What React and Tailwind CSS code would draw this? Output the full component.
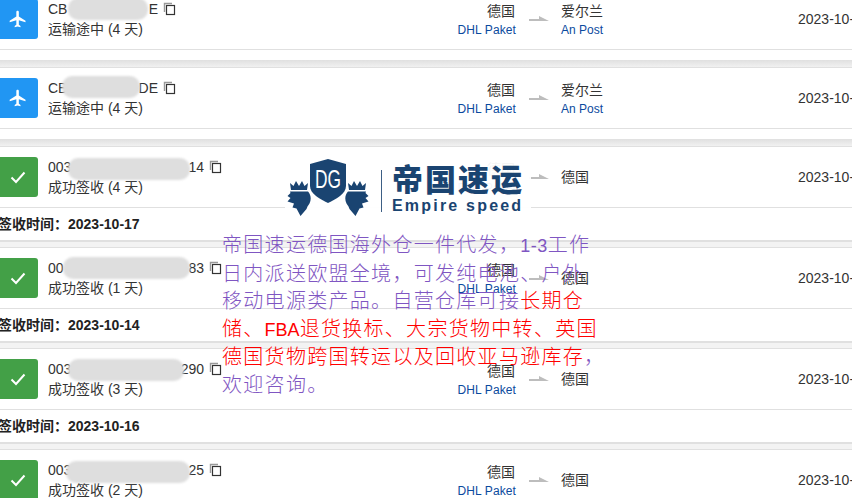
const FONT = "font-['Liberation_Sans','Noto_Sans_CJK_SC',sans-serif]";

function Plane() {
  return (
    <svg width="20" height="20" viewBox="0 0 24 24" fill="#fff">
      <path d="M21 16v-2l-8-5V3.5c0-.83-.67-1.5-1.5-1.5S10 2.67 10 3.5V9l-8 5v2l8-2.5V19l-2 1.5V22l3.5-1 3.5 1v-1.5L13 19v-5.5l8 2.5z" />
    </svg>
  );
}

function Check() {
  return (
    <svg width="18" height="18" viewBox="0 0 18 18" fill="none" stroke="#fff" strokeWidth="2">
      <path d="M2.5 9.5 7 14 15.5 4.5" />
    </svg>
  );
}

function CopyIcon() {
  return (
    <svg width="13" height="14" viewBox="0 0 13 14" fill="none" className="ml-[5px] -mt-[1px] shrink-0">
      <path d="M1.5 10V1.5H9" stroke="#999" strokeWidth="1.4" />
      <rect x="3.5" y="3.5" width="8" height="9" fill="#fff" stroke="#333" strokeWidth="1.2" />
    </svg>
  );
}

function Arrow() {
  return (
    <svg width="20" height="5" viewBox="0 0 20 5" className="ml-[13px] shrink-0 -mt-[1px]">
      <polygon points="0,3 10,3 10,0 20,5 0,5" fill="#bdbdbd" />
    </svg>
  );
}

function Row({ kind, prefix, suffix, codeW, status, dest, destCarrier, date, signed }) {
  return (
    <div>
      <div className="border-t border-[#e0e0e0]">
        <div className="flex items-center py-[10px] border-b border-[#e0e0e0] whitespace-nowrap">
          <div className={`w-[40px] h-[40px] -ml-[2px] rounded-[3px] flex items-center justify-center shrink-0 ${kind === "air" ? "bg-[#2196f3]" : "bg-[#43a047]"}`}>
            {kind === "air" ? <Plane /> : <Check />}
          </div>
          <div className="w-[360px] ml-[10px] shrink-0 text-[14px] leading-[20px] text-[#333]">
            <div className="flex items-center">
              <span className="flex justify-between" style={{ width: codeW }}>
                <span>{prefix}</span>
                <span>{suffix}</span>
              </span>
              <CopyIcon />
            </div>
            <div>{status}</div>
          </div>
          <div className="w-[108px] shrink-0 text-right leading-[18px] pt-[3px]">
            <div className="text-[14px] pr-[1px] text-[#333]">德国</div>
            <div className="text-[12px] mt-[1px] tracking-[0.1px] text-[#0b4a9e]">DHL Paket</div>
          </div>
          <Arrow />
          <div className={`w-[237px] ml-[12px] shrink-0 leading-[18px] ${destCarrier ? "pt-[3px]" : ""}`}>
            <div className="text-[14px] text-[#333]">{dest}</div>
            {destCarrier && <div className="text-[12px] mt-[1px] text-[#0b4a9e]">{destCarrier}</div>}
          </div>
          <div className="text-[14px] text-[#333]">{date}</div>
        </div>
      </div>
      {signed ? (
        <div className="h-[32px] -ml-[2px] flex items-center text-[14px] font-bold text-[#222] whitespace-nowrap">
          签收时间：{signed}
        </div>
      ) : (
        <div className="h-[10px]" />
      )}
      <div className={`h-[7px] ${signed ? "bg-[#f3f3f3] border-t-2 border-[#e0e0e0]" : "bg-gradient-to-b from-[#e0e0e0] to-[#f1f1f1]"}`} />
    </div>
  );
}

function Blur({ className }) {
  return <div className={`absolute h-[22px] rounded-[10px] bg-[#dedede] blur-[1px] ${className}`} />;
}

function Lion({ className }) {
  return (
    <svg width="24" height="36" viewBox="0 0 24 36" fill="#1a4471" className={className}>
      <path d="M4 10 3 3l3.5 3L9 1l3 5 3-5 2.5 5L21 3l-1 7z" />
      <path d="M3 11.5h18c3 3 3.5 8 1.5 12l-2 3-1 2.5-6 7-4-7.5-4-1 1.5-4-6.5-2 3-3.5-3-2 3-3z" />
    </svg>
  );
}

function Logo() {
  return (
    <div className="absolute left-[285px] top-[155px] w-[246px] h-[62px] bg-white/95 flex items-start">
      <div className="relative w-[86px] h-[62px] shrink-0">
        <Lion className="absolute left-[2px] top-[25px]" />
        <svg width="36" height="44" viewBox="0 0 36 44" className="absolute left-[25px] top-[4px]">
          <path d="M18 0 36 5v22c0 8-10 13-18 17C10 40 0 35 0 27V5z" fill="#1a4471" />
          <text x="18" y="29" textAnchor="middle" fontSize="25" fill="#fff" fontFamily="Liberation Sans, sans-serif" textLength="26" lengthAdjust="spacingAndGlyphs">DG</text>
        </svg>
        <Lion className="absolute left-[60px] top-[25px] -scale-x-100" />
      </div>
      <div className="w-[1px] h-[42px] mt-[15px] ml-[10px] bg-[#3d5f85] shrink-0" />
      <div className="ml-[10px] mt-[10px] text-[#1a4471]">
        <div className="text-[31px] leading-[32px] font-black tracking-[2px] whitespace-nowrap">帝国速运</div>
        <div className="text-[16px] leading-[17px] font-bold tracking-[2.2px] whitespace-nowrap">Empire speed</div>
      </div>
    </div>
  );
}

function Watermark() {
  return (
    <div className="absolute left-[222px] top-[232px] text-[20px] leading-[27.6px] tracking-[1.3px] font-light text-[#7f56c2] whitespace-nowrap">
      <div>帝国速运德国海外仓一件代发，<span className="text-[18px] tracking-[0.5px]">1-3</span>工作</div>
      <div>日内派送欧盟全境，可发纯电池、户外</div>
      <div>移动电源类产品。自营仓库可接<span className="text-[#ff0000]">长期仓</span></div>
      <div className="text-[#ff0000]">储、<span className="text-[18px] tracking-[0px]">FBA</span>退货换标、大宗货物中转、英国</div>
      <div className="text-[#ff0000]">德国货物跨国转运以及回收亚马逊库存<span className="text-[#7f56c2]">，</span></div>
      <div>欢迎咨询。</div>
    </div>
  );
}

export default function App() {
  return (
    <div className={`relative w-[852px] h-[498px] overflow-hidden bg-white ${FONT}`}>
      <div className="-mt-[12px] w-[1000px]">
        <Row kind="air" prefix="CB" suffix="E" codeW={110} status="运输途中 (4 天)" dest="爱尔兰" destCarrier="An Post" date="2023-10-10" />
        <Row kind="air" prefix="CB" suffix="DE" codeW={110} status="运输途中 (4 天)" dest="爱尔兰" destCarrier="An Post" date="2023-10-10" />
        <Row kind="ok" prefix="003" suffix="14" codeW={156} status="成功签收 (4 天)" dest="德国" date="2023-10-13" signed="2023-10-17" />
        <Row kind="ok" prefix="00" suffix="83" codeW={156} status="成功签收 (1 天)" dest="德国" date="2023-10-13" signed="2023-10-14" />
        <Row kind="ok" prefix="003" suffix="290" codeW={156} status="成功签收 (3 天)" dest="德国" date="2023-10-13" signed="2023-10-16" />
        <Row kind="ok" prefix="003" suffix="25" codeW={156} status="成功签收 (2 天)" dest="德国" date="2023-10-13" />
      </div>
      <Blur className="left-[68px] top-[-2px] w-[80px]" />
      <Blur className="left-[62px] top-[76px] w-[78px]" />
      <Blur className="left-[68px] top-[158px] w-[122px]" />
      <Blur className="left-[63px] top-[257px] w-[127px]" />
      <Blur className="left-[68px] top-[359px] w-[116px]" />
      <Blur className="left-[66px] top-[461px] w-[124px]" />
      <Logo />
      <Watermark />
    </div>
  );
}
